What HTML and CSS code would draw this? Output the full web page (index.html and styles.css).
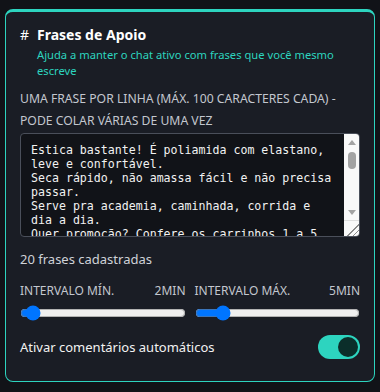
FILE: index.html
```html
<!DOCTYPE html>
<html>

<head>
    <title>Frases de Apoio</title>
    <link rel="stylesheet" href="styles.css">
</head>

<body>
    <div class="card">
        <!-- cabeçalho -->
        <div class="card-head">
            <span class="hash">#</span>
            <div>
                <h2>Frases de Apoio</h2>
                <p class="sub">Ajuda a manter o chat ativo com frases que você mesmo escreve</p>
            </div>
        </div>

        <label class="field-label" for="frases">Uma frase por linha (máx. 100 caracteres cada) - pode colar várias de uma vez</label>
        <div class="ta-wrap">
            <textarea id="frases" class="phrases" spellcheck="false">Estica bastante! É poliamida com elastano, leve e confortável.
Seca rápido, não amassa fácil e não precisa passar.
Serve pra academia, caminhada, corrida e dia a dia.
Quer promoção? Confere os carrinhos 1 a 5 aqui embaixo.
Tem do P ao GG, escolhe o seu tamanho.
Cintura alta que não enrola nem desce.
Tecido que não fica transparente no agachamento.
Cores novas chegando essa semana!
Frete grátis acima de R$ 99.
Pode lavar na máquina sem medo.
Modelagem que valoriza o corpo.
Já tá no carrinho? Aproveita o cupom da live.
Conjunto completo com top e legging.
Compra hoje e recebe rapidinho.
Qualquer dúvida, manda aqui no chat!
Troca fácil se o tamanho não servir.
Ideal pra quem treina todo dia.
Tem bolso lateral pra guardar o celular.
Estoque limitado, corre!
Obrigada por estar aqui com a gente!</textarea>
            <!-- barra de rolagem clara desenhada por cima -->
            <div class="fake-bar" aria-hidden="true">
                <span class="arrow"><i class="tri up"></i></span>
                <span class="track"><span class="thumb"></span></span>
                <span class="arrow"><i class="tri down"></i></span>
                <span class="grip"></span>
            </div>
        </div>

        <div class="count">20 frases cadastradas</div>

        <!-- intervalos -->
        <div class="ranges">
            <div class="range-box">
                <div class="range-top">
                    <span>Intervalo mín.</span>
                    <span>2min</span>
                </div>
                <input type="range" min="1" max="30" value="2">
            </div>
            <div class="range-box">
                <div class="range-top">
                    <span>Intervalo máx.</span>
                    <span>5min</span>
                </div>
                <input type="range" min="1" max="30" value="5">
            </div>
        </div>

        <div class="toggle-row">
            <span>Ativar comentários automáticos</span>
            <span class="toggle"><span class="knob"></span></span>
        </div>
    </div>
</body>

</html>
```

FILE: styles.css
```css
html,
body {
    margin: 0;
    background: #111318;
    font-family: "Noto Sans", "Open Sans", sans-serif;
    color: #e6e8ec;
}

body {
    padding: 9px 5px;
}

.card {
    background: #1a1d25;
    border: 1px solid #2dd4bf;
    border-top-width: 3px;
    border-radius: 8px;
    padding: 12px 14px 22px 14px;
}

.card-head {
    display: flex;
}

.hash {
    flex: none;
    width: 17px;
    font-size: 14px;
    color: #fff;
    line-height: 22px;
}

.card-head h2 {
    margin: 0;
    font-size: 14px;
    line-height: 22px;
    color: #fff;
}

.card-head .sub {
    margin: 1px 0 0 0;
    font-size: 11.2px;
    line-height: 16px;
    color: #2dd4bf;
}

.field-label {
    display: block;
    margin-top: 9px;
    font-size: 12.2px;
    line-height: 22px;
    text-transform: uppercase;
    color: #c3c7cf;
}

.ta-wrap {
    position: relative;
    margin-top: 1px;
}

.phrases {
    display: block;
    box-sizing: border-box;
    width: 100%;
    height: 104px;
    padding: 9px 24px 6px 10px;
    background: #111318;
    color: #f2f2f2;
    border: 1px solid #4a4f5a;
    border-radius: 4px;
    font-family: "DejaVu Sans Mono", monospace;
    font-size: 11.6px;
    line-height: 14px;
    resize: none;
    outline: none;
    overflow: hidden;
}

.fake-bar {
    position: absolute;
    top: 1px;
    right: 1px;
    bottom: 1px;
    width: 15px;
    display: flex;
    flex-direction: column;
    background: #f9f9f9;
    border-radius: 0 3px 3px 0;
}

.arrow {
    height: 16px;
    display: flex;
    align-items: center;
    justify-content: center;
}

.tri {
    width: 0;
    height: 0;
    border-left: 4.5px solid transparent;
    border-right: 4.5px solid transparent;
}

.tri.up {
    border-bottom: 5px solid #a3a3a3;
}

.tri.down {
    border-top: 5px solid #a3a3a3;
}

.track {
    flex: 1;
    padding-top: 2px;
}

.thumb {
    display: block;
    width: 8px;
    height: 17px;
    margin-left: 4px;
    background: #a3a3a3;
    border-radius: 4px;
}

.grip {
    height: 15px;
    border-top: 1px solid #dedede;
    background-image: linear-gradient(135deg, transparent 58%, #8a8a8a 58%, #8a8a8a 64%, transparent 64%, transparent 77%, #8a8a8a 77%, #8a8a8a 83%, transparent 83%);
}

.count {
    margin-top: 13px;
    font-size: 13px;
    line-height: 18px;
    color: #cfd2d8;
}

.ranges {
    display: grid;
    grid-template-columns: 1fr 1fr;
    gap: 9px;
    margin-top: 15px;
}

.range-top {
    display: flex;
    justify-content: space-between;
    font-size: 12px;
    line-height: 16px;
    text-transform: uppercase;
    color: #c3c7cf;
}

.range-box input {
    display: block;
    width: 100%;
    height: 16px;
    margin: 6px 0 0 0;
}

.toggle-row {
    display: flex;
    justify-content: space-between;
    align-items: center;
    margin-top: 14px;
    font-size: 13px;
    color: #f2f2f2;
}

.toggle {
    display: flex;
    justify-content: flex-end;
    width: 42px;
    height: 24px;
    box-sizing: border-box;
    padding: 2px;
    background: #2dd4bf;
    border-radius: 12px;
}

.knob {
    width: 20px;
    height: 20px;
    border-radius: 50%;
    background: #0b2e2a;
}
```
